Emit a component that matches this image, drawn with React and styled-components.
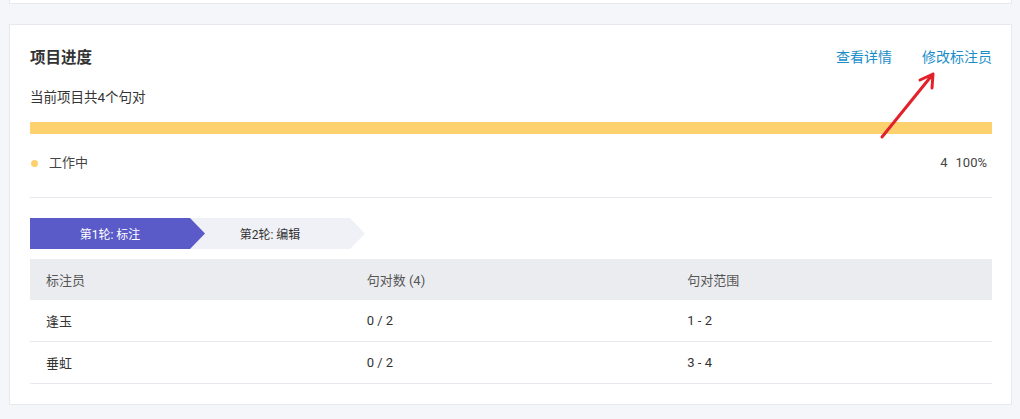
import React from "react";
import styled, { createGlobalStyle } from "styled-components";

const GlobalStyle = createGlobalStyle`
  body {
    margin: 0;
    background: #f5f6fa;
    font-family: Roboto, "Noto Sans CJK SC", sans-serif;
    color: #333;
  }
`;

const annotators = [
  { name: "逢玉", count: "0 / 2", range: "1 - 2" },
  { name: "垂虹", count: "0 / 2", range: "3 - 4" },
];

const rounds = [
  { label: "第1轮: 标注", active: true },
  { label: "第2轮: 编辑", active: false },
];

export default function App() {
  return (
    <Page>
      <GlobalStyle />
      <TopCard />
      <Card>
        <Header>
          <Title>项目进度</Title>
          <Links>
            <LinkText>查看详情</LinkText>
            <LinkText>修改标注员</LinkText>
          </Links>
        </Header>
        <Summary>当前项目共4个句对</Summary>
        <Bar />
        <Legend>
          <Dot />
          <LegendLabel>工作中</LegendLabel>
          <LegendValue>
            <span>4</span>
            <span>100%</span>
          </LegendValue>
        </Legend>
        <Steps>
          {rounds.map((r, i) => (
            <Step key={r.label} active={r.active} first={i === 0}>
              {r.label}
            </Step>
          ))}
        </Steps>
        <Table>
          <HeadRow>
            <Cell>标注员</Cell>
            <Cell>句对数 (4)</Cell>
            <Cell>句对范围</Cell>
          </HeadRow>
          {annotators.map((a) => (
            <Row key={a.name}>
              <Cell>{a.name}</Cell>
              <Cell>{a.count}</Cell>
              <Cell>{a.range}</Cell>
            </Row>
          ))}
        </Table>
        <Pointer viewBox="0 0 100 90" width="100" height="90">
          <path
            d="M22 77 L73 14 M60 20 L73 14 L72 28"
            fill="none"
            stroke="#e3212b"
            strokeWidth="3"
            strokeLinecap="round"
            strokeLinejoin="round"
          />
        </Pointer>
      </Card>
    </Page>
  );
}

const Page = styled.div`
  padding: 0 8px 15px 9px;
`;
const TopCard = styled.div`
  height: 3px;
  background: #fff;
  border: 1px solid #e8e9ef;
  border-top: none;
  margin-bottom: 20px;
`;
const Card = styled.div`
  position: relative;
  background: #fff;
  border: 1px solid #e8e9ef;
  padding: 20px 19px 20px 20px;
`;
const Header = styled.div`
  display: flex;
  align-items: center;
  justify-content: space-between;
  height: 22px;
`;
const Title = styled.div`
  font-size: 15.5px;
  font-weight: 700;
  color: #333;
`;
const Links = styled.div`
  display: flex;
  gap: 30px;
`;
const LinkText = styled.a`
  font-size: 14px;
  color: #1b8ec9;
  cursor: pointer;
`;
const Summary = styled.div`
  margin-top: 19px;
  font-size: 13.5px;
  line-height: 22px;
  color: #333;
`;
const Bar = styled.div`
  margin-top: 14px;
  height: 12px;
  background: #fdd26e;
`;
const Legend = styled.div`
  display: flex;
  align-items: center;
  margin-top: 18px;
  padding: 0 5px 23px 1px;
  line-height: 22px;
  border-bottom: 1px solid #e8e9ee;
  font-size: 13px;
`;
const Dot = styled.span`
  width: 7px;
  height: 7px;
  border-radius: 50%;
  background: #fdd26e;
`;
const LegendLabel = styled.span`
  margin-left: 11px;
  color: #444;
`;
const LegendValue = styled.span`
  margin-left: auto;
  display: flex;
  gap: 8px;
  color: #444;
`;
const Steps = styled.div`
  display: flex;
  margin-top: 20px;
  height: 31px;
`;
const Step = styled.div`
  position: relative;
  z-index: ${(p) => (p.first ? 2 : 1)};
  width: 175px;
  margin-left: ${(p) => (p.first ? "0" : "-15px")};
  padding-right: 15px;
  box-sizing: border-box;
  display: flex;
  align-items: center;
  justify-content: center;
  font-size: 12px;
  color: ${(p) => (p.active ? "#fff" : "#333")};
  background: ${(p) => (p.active ? "#5a5bc9" : "#f0f1f6")};
  clip-path: polygon(0 0, 160px 0, 175px 50%, 160px 100%, 0 100%);
`;
const Table = styled.div`
  margin-top: 10px;
  font-size: 13px;
`;
const HeadRow = styled.div`
  display: grid;
  grid-template-columns: repeat(3, 1fr);
  height: 41px;
  align-items: center;
  background: #ebecf0;
  color: #555;
`;
const Row = styled.div`
  display: grid;
  grid-template-columns: repeat(3, 1fr);
  height: 41px;
  align-items: center;
  border-bottom: 1px solid #e8e9ee;
  color: #333;
`;
const Cell = styled.div`
  padding-left: 16px;
`;
const Pointer = styled.svg`
  position: absolute;
  left: 850px;
  top: 35px;
`;
